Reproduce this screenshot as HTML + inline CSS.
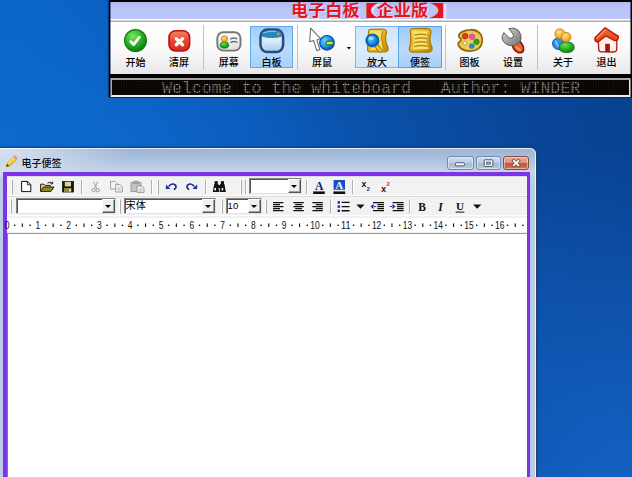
<!DOCTYPE html>
<html lang="zh">
<head>
<meta charset="utf-8">
<title>电子白板</title>
<style>
*{box-sizing:border-box;margin:0;padding:0}
html,body{width:632px;height:477px;overflow:hidden}
body{position:relative;font-family:"Liberation Sans","Noto Sans CJK SC",sans-serif;font-size:12px;color:#000;
background:
 radial-gradient(ellipse 260px 400px at 640px 540px, rgba(26,112,218,.75), rgba(26,112,218,0) 100%),
 radial-gradient(ellipse 380px 340px at 10px 320px, rgba(22,118,220,.5), rgba(22,118,220,0) 100%),
 linear-gradient(72deg,#0b66cc 0%,#0b64c8 25%,#0b5cbc 45%,#0a50a8 63%,#094698 82%,#083f8d 100%);}
.bl,.br{display:inline-block;font-weight:bold}
.bl{transform:scaleX(2.3);transform-origin:84% 50%}
.br{transform:translateX(1.4px) scaleX(2.5);transform-origin:2% 50%}
/* ---------- top whiteboard bar ---------- */
#wb{position:absolute;left:109px;top:0;width:523px;height:97px;background:#000;box-shadow:0 1px 0 #0a2a66,-1px 0 1px rgba(0,20,70,.5)}
#wb .ttl{position:absolute;left:1px;top:2px;right:1px;height:18px;background:linear-gradient(#b0b9f7,#bac4f9 30%,#bcc6fa);color:#e8141c;font-weight:bold;font-size:15.8px;line-height:18px;text-align:center;letter-spacing:0px}
#wb .ttl span{position:absolute;left:181px;transform:scaleX(1.085);transform-origin:0 50%;top:-0.4px;white-space:nowrap;text-shadow:1px 1px 0 rgba(255,235,240,.7)}
#wb .tb{position:absolute;left:1px;top:19px;right:1px;height:55px;border-top:1px solid #fff;background:linear-gradient(#d6d6d0 0,#d6d6d0 1px,#aeaea4 1px,#aeaea4 2px,#ffffff 2px,#fbfbfb 50%,#e8e8e8 100%)}
#wb .tbi{position:absolute;left:1px;top:1px;right:0;bottom:0}
.hl{position:absolute}
#wb .edge{position:absolute;left:1px;top:0;width:1px;bottom:0;background:rgba(0,0,16,.42);z-index:5}
#wb .edge.r{left:auto;right:1px;background:rgba(0,0,16,.5)}
svg.ic{position:absolute;left:0;top:0}
.lb{position:absolute;top:35.8px;width:0;font-weight:500;font-size:10px;line-height:12px;white-space:nowrap;display:flex;justify-content:center;color:#000}
.sep{position:absolute;top:4px;width:1px;height:45px;background:#c2c2c2}
#led{position:absolute;left:1px;top:78px;right:1px;border-right:2px solid #e8e8e8;height:18.6px;background:#000;border-top:2.1px solid #a4a4a4;border-bottom:2px solid #efefef;border-left:2px solid #a8a8a8;overflow:hidden}
#led .dots{position:absolute;left:0;top:0;right:0;bottom:0;background-image:radial-gradient(circle at 1px 1px,#20140a 0.6px,rgba(0,0,0,0) 1px);background-size:1.67px 1.67px}
#led .txt{position:absolute;left:50px;top:1px;font-family:"Liberation Mono","DejaVu Sans Mono",monospace;font-size:16.6px;line-height:15px;color:#cfcfcf;white-space:pre;letter-spacing:0px}
#led .grid{position:absolute;left:0;top:0;right:0;bottom:0;background-image:linear-gradient(rgba(0,0,0,.7) .75px,rgba(0,0,0,0) .75px),linear-gradient(90deg,rgba(0,0,0,.7) .75px,rgba(0,0,0,0) .75px);background-size:1.67px 1.67px}
/* ---------- note window ---------- */
#win{position:absolute;left:-8px;top:147px;width:544.5px;height:340px;border-radius:7px 7px 0 0;background:radial-gradient(ellipse 130px 34px at 8px 0,rgba(255,255,255,.62),rgba(255,255,255,0) 100%),linear-gradient(#9cb4d5 0,#a6bddb 8px,#b6c9e2 16px,#c6d6ea 24px,#b9cde6 30px,#b9cde6 100%);border:1px solid #27406a;box-shadow:0 0 2.5px rgba(0,10,50,.4)}
#win .hi{position:absolute;left:0;right:0;top:0;bottom:0;border-radius:6px 6px 0 0;border:1px solid rgba(255,255,255,.75);border-bottom:none}
#win .pen{margin-left:8px}
#win .cap{position:absolute;left:28.4px;top:9.8px;font-weight:500;font-size:10px;line-height:12px;white-space:nowrap;color:#0a0a14}
#purple{position:absolute;left:3px;top:172px;width:527px;height:320px;background:#7e33e8}
#inner{position:absolute;left:6.5px;top:176px;width:520.5px;height:310px;background:#f1f1f1}
.row{position:absolute;left:0;right:0;height:20px;background:#f2f2f2;border-bottom:1px solid #fdfdfd;border-top:1px solid #dcdcdc}
.cmb{position:absolute;height:16px;background:#fff;border:1px solid #808080;border-right-color:#e4e4e4;border-bottom-color:#e4e4e4;box-shadow:inset 1px 1px 0 #555;font-size:10.1px;line-height:13px;padding-left:0.6px;white-space:nowrap;overflow:hidden;font-family:"Liberation Sans","Noto Sans CJK SC",sans-serif}
.cmb i{position:absolute;right:0;top:0;width:13.5px;bottom:0;background:#efefef;border:1px solid #fff;border-right-color:#555;border-bottom-color:#555;box-shadow:inset -1px -1px 0 #a0a0a0}
.cmb i:after{content:"";position:absolute;left:2.6px;top:4.6px;border-left:3px solid transparent;border-right:3px solid transparent;border-top:3.4px solid #000}
#ruler{position:absolute;left:0;right:0;top:40px;height:18px;background:#f1f1f1}
#ruler .strip{position:absolute;left:0;right:0;top:2px;height:14px;background:#fff}
#edit{position:absolute;left:0;right:0;top:57px;bottom:0;background:#fff;border-top:1px solid #9a9a9a;border-left:1px solid #7c8478}
.wbtn{position:absolute;top:8px;height:14px;border:1px solid #7189ab;border-radius:3px;background:linear-gradient(#cfdcec 0%,#bccde3 48%,#a4bad7 52%,#b7c9e1 100%);box-shadow:inset 0 0 0 1px rgba(255,255,255,.45);margin-left:8px}
.wbtn svg{position:absolute;left:0;top:0}
.wbtn.cls{border-color:#8a4a44;background:linear-gradient(#e5ab9d 0%,#dc9080 48%,#c8543a 52%,#d66e53 100%)}
</style>
</head>
<body>
<div id="wb">
  <div class="ttl"><span>电子白板<b class="bl">【</b>企业版<b class="br">】</b></span></div>
  <div class="tb" id="tb"><div class="tbi">
    <div class="hl" style="left:139px;top:5px;width:43px;height:42px;background:linear-gradient(#a2cdfa,#bcdcfb 50%,#a8d0fa);border:1px solid #62a8ee"></div>
    <div class="hl" style="left:244px;top:5px;width:43px;height:42px;background:linear-gradient(#cfe5fb,#dcecfc 55%,#cfe5fb);border:1px solid #7db6ee;border-right:none"></div>
    <div class="hl" style="left:287px;top:5px;width:44px;height:42px;background:linear-gradient(#9fcbf9,#bcdcfb 55%,#a6cffa);border:1px solid #5aa2ec"></div>
    <div class="sep" style="left:92px"></div><div class="sep" style="left:186px"></div><div class="sep" style="left:334px"></div><div class="sep" style="left:426px"></div>
    <svg class="ic" width="521" height="53" viewBox="111 21 521 53">
      <defs>
        <radialGradient id="gGreen" cx="38%" cy="30%" r="75%"><stop offset="0" stop-color="#7aea5c"/><stop offset=".55" stop-color="#27b027"/><stop offset="1" stop-color="#0f7414"/></radialGradient>
        <linearGradient id="gRed" x1="0" y1="0" x2="0" y2="1"><stop offset="0" stop-color="#f58468"/><stop offset=".5" stop-color="#e8452f"/><stop offset="1" stop-color="#d22a1c"/></linearGradient>
        <linearGradient id="gCard" x1="0" y1="0" x2="0" y2="1"><stop offset="0" stop-color="#ffffff"/><stop offset="1" stop-color="#dedede"/></linearGradient>
        <linearGradient id="gBoard" x1="0" y1="0" x2="0" y2="1"><stop offset="0" stop-color="#f6fbff"/><stop offset=".55" stop-color="#d4e9f9"/><stop offset="1" stop-color="#9ccbee"/></linearGradient>
        <radialGradient id="gBlue" cx="35%" cy="35%" r="70%"><stop offset="0" stop-color="#62d2fa"/><stop offset=".6" stop-color="#1f8ee6"/><stop offset="1" stop-color="#0b4fc4"/></radialGradient>
        <linearGradient id="gGold" x1="0" y1="0" x2="1" y2="1"><stop offset="0" stop-color="#f7dc6a"/><stop offset=".5" stop-color="#e6b41e"/><stop offset="1" stop-color="#bd840a"/></linearGradient>
        <radialGradient id="gOrange" cx="40%" cy="35%" r="70%"><stop offset="0" stop-color="#ffe27a"/><stop offset=".6" stop-color="#f6b43a"/><stop offset="1" stop-color="#d98a1e"/></radialGradient>
        <radialGradient id="gGBody" cx="40%" cy="30%" r="75%"><stop offset="0" stop-color="#6ee05a"/><stop offset=".6" stop-color="#22a822"/><stop offset="1" stop-color="#0d7a12"/></radialGradient>
        <linearGradient id="gGray" x1="0" y1="0" x2="1" y2="1"><stop offset="0" stop-color="#d8d8d8"/><stop offset=".5" stop-color="#a4a4a4"/><stop offset="1" stop-color="#6c6c6c"/></linearGradient>
        <linearGradient id="gRoof" x1="0" y1="0" x2="0" y2="1"><stop offset="0" stop-color="#f4702a"/><stop offset="1" stop-color="#e23a18"/></linearGradient>
      </defs>
      <!-- start -->
      <circle cx="135.5" cy="40.5" r="10.9" fill="url(#gGreen)" stroke="#137a16" stroke-width="1.2"/>
      <path d="M130.8 41.6 L133.6 44.6 L139.4 37.2" fill="none" stroke="#fff" stroke-width="2.7" stroke-linecap="round" stroke-linejoin="round"/>
      <!-- clear -->
      <rect x="169" y="30.8" width="20.6" height="20.2" rx="6.5" fill="url(#gRed)" stroke="#b21410" stroke-width="1.6"/>
      <path d="M176.3 38.7 L182.5 44.7 M182.5 38.7 L176.3 44.7" stroke="#fff4ec" stroke-width="3.4" stroke-linecap="round"/>
      <!-- screen (card) -->
      <rect x="217.3" y="32.2" width="23.2" height="18.4" rx="6" fill="url(#gCard)" stroke="#767676" stroke-width="1.9"/>
      <ellipse cx="224.4" cy="45" rx="4.3" ry="3.2" fill="url(#gGBody)" stroke="#0f7a14" stroke-width=".7"/>
      <circle cx="224.4" cy="38.8" r="3" fill="url(#gOrange)" stroke="#c47a1e" stroke-width=".8"/>
      <path d="M230.8 38.9 Q233.8 37 236.9 38.7 M230.8 42.3 Q233.8 40.6 236.9 42.1" fill="none" stroke="#6e6e6e" stroke-width="1.5" stroke-linecap="round"/>
      <!-- whiteboard -->
      <rect x="260.5" y="29.5" width="22.6" height="22.6" rx="7" fill="url(#gBoard)" stroke="#2a4a80" stroke-width="2.5"/>
      <path d="M261.6 36.4 Q262 30.8 267 30.6 L277 30.6 Q281.8 30.8 282 36.4 Q272 39.4 261.6 36.4Z" fill="#2487be"/>
      <path d="M263 33 Q268 30.9 276 31.6" stroke="#7fd0ee" stroke-width="1" fill="none"/>
      <circle cx="278.3" cy="33.7" r="1.5" fill="#f08a28"/>
      <!-- mouse -->
      <path d="M310.6 28.2 L309.7 41.8 L313.6 40.4 L316.8 50.6 L319.9 49.7 L316.9 39.9 L320.4 38.4 Z" fill="#fff" stroke="#6e6e6e" stroke-width="1.1" stroke-linejoin="round"/>
      <circle cx="327" cy="42.8" r="7.3" fill="url(#gBlue)" stroke="#0d3fb8" stroke-width="1.1"/>
      <rect x="326" y="41.1" width="7.4" height="3.6" rx="1.8" fill="#c9e64a" stroke="#15802a" stroke-width="1.1"/>
      <path d="M346.6 46.9 L351.2 46.9 L348.9 49.5 Z" fill="#111"/>
      <!-- zoom -->
      <path d="M368.6 31.4 Q368.4 29.2 371.4 29.4 L383 29 Q386.4 29.4 386.6 32.4 Q385 36 385.6 40 Q386.4 44 388 47.6 Q388.8 51.4 385.2 51.8 L370 52 Q367 51.6 367.6 48.6 Z" fill="url(#gGold)" stroke="#a87a0a" stroke-width="1.2" stroke-linejoin="round"/>
      <path d="M371 31.2 L382.6 30.8 Q381.2 36 381.8 40 Q382.6 45 384 49.6 L371 50 Z" fill="#f6de68"/>
      <path d="M382.6 31 Q381.2 36 381.8 40 Q382.6 45 384 49.8" stroke="#b8860c" stroke-width="1.1" fill="none"/>
      <path d="M376.4 45.6 L380.2 50.4" stroke="#a87a0a" stroke-width="4.8" stroke-linecap="round"/>
      <path d="M376.4 45.6 L380.2 50.4" stroke="#ecc22e" stroke-width="2.8" stroke-linecap="round"/>
      <circle cx="372.4" cy="40.4" r="5.9" fill="url(#gBlue)" stroke="#0a62ac" stroke-width="2.2"/>
      <ellipse cx="371" cy="38.2" rx="2.8" ry="1.7" fill="#b4e6fc" opacity=".75"/>
      <!-- note -->
      <path d="M410.4 31 Q410.4 28.6 413.6 28.6 L427 28.4 Q430.6 28.8 431 32 Q429.6 36 429.8 40 Q430.4 44 432 47.4 Q432.8 51.6 428.8 52 L412.6 52.2 Q408.8 51.8 409.4 48 Q410.8 44 410.8 40 Q410.8 36 410.4 31 Z" fill="url(#gGold)" stroke="#a87a0a" stroke-width="1.3" stroke-linejoin="round"/>
      <path d="M413.4 31.6 L427.4 31.2 Q426.6 36 426.8 40 Q427.2 45 428.6 49 L412.8 49.4 Q413.8 44 413.8 40 Z" fill="#f8e274"/>
      <path d="M414.6 35 Q420.6 33.4 426.6 34.8 M414.6 38.8 Q420.6 37.2 426.8 38.6 M414.4 42.6 Q420.6 41 427.2 42.4 M414.2 46.4 Q420.6 44.8 427.8 46.2" stroke="#bf8c0c" stroke-width="1.5" fill="none"/>
      <!-- palette -->
      <path d="M470.4 29.8 C477.6 29.4 482.6 34.2 482.2 41 C481.8 47.6 476.6 51.4 469.6 51.2 C463 51 458.4 47.6 458.2 44 C458 41.6 461.4 41.4 461.2 39.6 C461 37.8 458.6 38 458.8 35.8 C459.2 32.4 464.2 30 470.4 29.8 Z" fill="#eccb52" stroke="#94690c" stroke-width="1.8"/>
      <circle cx="465.1" cy="36.1" r="2.9" fill="#e23a1c" stroke="#a3240e" stroke-width=".6"/>
      <circle cx="472.1" cy="36.8" r="2.7" fill="#f24fb4" stroke="#b0308a" stroke-width=".6"/>
      <circle cx="476.5" cy="41.8" r="2.7" fill="#22a822" stroke="#117016" stroke-width=".6"/>
      <circle cx="471.8" cy="46.1" r="2.4" fill="#1f8fe0" stroke="#1262a8" stroke-width=".6"/>
      <ellipse cx="464.9" cy="43.2" rx="2" ry="1.7" fill="#fffdf2" stroke="#a8801c" stroke-width=".7" transform="rotate(35 464.9 43.2)"/>
      <!-- settings -->
      <path d="M512.4 45.4 Q513.2 50.2 518.2 52.4 Q522.6 53.6 523.6 50 Q524 45.4 519.4 41.2 Z" fill="#e8642c" stroke="#8e0c0c" stroke-width="1.6" stroke-linejoin="round"/>
      <path d="M516 46.4 Q517.6 49.6 520.6 50" stroke="#f6a05a" stroke-width="1.4" fill="none" stroke-linecap="round"/>
      <path d="M508.8 28.6 Q514 26.8 518.2 30.2 Q522.2 34.2 520.8 40 Q518.6 45.6 512.2 45.8 Q504.6 45.4 502.2 39.2 Q501.6 35.4 504 32.6 L509 37.8 Q511.2 39 512.8 37.4 Q514.2 35.6 512.8 33.8 Z" fill="url(#gGray)" stroke="#5c5c5c" stroke-width="1" stroke-linejoin="round"/>
      <!-- about -->
      <path d="M552.6 44 Q552.4 38.4 558 38.2 L563 38.4 L563 49.6 Q557 50.6 554.2 47.8 Q552.8 46.4 552.6 44Z" fill="#2a92e6" stroke="#0f58a8" stroke-width="1"/>
      <path d="M555.8 41 Q556.4 45.4 559.6 47" stroke="#8ad2fb" stroke-width="1.6" fill="none" stroke-linecap="round"/>
      <circle cx="559.8" cy="33.8" r="5" fill="url(#gOrange)" stroke="#cc8426" stroke-width=".9"/>
      <path d="M559 48 Q558.6 42 566.4 41.8 Q574.4 42 574.2 48 Q573.4 52.6 566.6 52.6 Q559.6 52.4 559 48Z" fill="url(#gGBody)" stroke="#0e7414" stroke-width=".9"/>
      <circle cx="566.1" cy="37.1" r="4.8" fill="url(#gOrange)" stroke="#cc8426" stroke-width=".9"/>
      <!-- exit -->
      <path d="M598.2 40 L598.8 49.6 Q599 51.6 601.4 51.8 L613.6 52 Q616.8 51.8 616.8 49 L616.8 39 L606 33.6 Z" fill="#fff1ea" stroke="#b01a12" stroke-width="1.3" stroke-linejoin="round"/>
      <rect x="605.2" y="43.8" width="4.6" height="8.2" fill="#9c1612"/>
      <path d="M605.1 27.7 L595 37.8 Q594 42 598 42 L605.8 36 L614.6 40.6 Q618.8 40.8 618.4 36.4 Z" fill="url(#gRoof)" stroke="#b01410" stroke-width="1.3" stroke-linejoin="round"/>
      <path d="M605.2 29.8 L597 38.2" stroke="#f89a4a" stroke-width="1.4" stroke-linecap="round" fill="none"/>
    </svg>
    <div class="lb" style="left:24.4px">开始</div><div class="lb" style="left:68px">清屏</div>
    <div class="lb" style="left:117.7px">屏幕</div><div class="lb" style="left:160.5px">白板</div>
    <div class="lb" style="left:211px">屏鼠</div><div class="lb" style="left:266px">放大</div><div class="lb" style="left:309px">便签</div>
    <div class="lb" style="left:358.6px">图板</div><div class="lb" style="left:402px">设置</div>
    <div class="lb" style="left:452px">关于</div><div class="lb" style="left:495.4px">退出</div>
  </div></div>
  <div class="edge"></div><div class="edge r"></div>
  <div id="led"><div class="dots"></div><div class="txt">Welcome to the whiteboard   Author: WINDER</div><div class="grid"></div></div>
</div>
<div id="win">
  <div class="hi"></div>
  <svg class="pen" width="14" height="14" viewBox="5 155 14 14" style="position:absolute;left:3.8px;top:7.4px">
    <path d="M6.2 166.8 L7.4 163.4 L13.6 156.6 Q15 155.6 16.2 156.8 Q17.4 158 16.4 159.4 L10 166 Z" fill="#f6cf2a" stroke="#b98a10" stroke-width=".7"/>
    <path d="M13.2 157 L16 159.8 L16.6 159 Q17.4 157.8 16.2 156.7 Q15 155.7 13.9 156.4Z" fill="#f08aa6"/>
    <path d="M6.2 166.8 L7.2 164 L9.2 165.8 Z" fill="#4a3510"/>
    <path d="M8.4 163.2 L14 157.2" stroke="#fff2a0" stroke-width="1" fill="none"/>
  </svg>
  <div class="cap">电子便签</div>
  <div class="wbtn" style="left:446px;width:26.5px"><svg width="23" height="12" viewBox="0 0 23 12"><rect x="7.4" y="5.8" width="9" height="3" rx=".8" fill="#fff" stroke="#3c4a5e" stroke-width=".9"/></svg></div>
  <div class="wbtn" style="left:474.5px;width:25.5px"><svg width="23" height="12" viewBox="0 0 23 12"><rect x="7.2" y="2.8" width="8.6" height="6.6" rx=".8" fill="#fff" stroke="#3c4a5e" stroke-width=".9"/><rect x="9.6" y="5" width="3.8" height="2.2" fill="#9db4cf" stroke="#3c4a5e" stroke-width=".7"/></svg></div>
  <div class="wbtn cls" style="left:501.6px;width:26.5px"><svg width="24" height="12" viewBox="0 0 24 12"><path d="M9.8 3.8 L14.4 8.2 M14.4 3.8 L9.8 8.2" stroke="#6a3a32" stroke-width="3.2" stroke-linecap="square"/><path d="M9.8 3.8 L14.4 8.2 M14.4 3.8 L9.8 8.2" stroke="#fff" stroke-width="1.9" stroke-linecap="square"/></svg></div>
</div>
<div id="purple"></div>
<div id="inner">
  <div class="row" style="top:0"></div>
  <div class="row" style="top:20px"></div>
  <div id="ruler"><div class="strip"></div></div>
  <div id="edit"></div>
</div>
<svg id="tbi" width="632" height="70" viewBox="0 170 632 70" style="position:absolute;left:0;top:170px">
  <g class="grips" fill="none">
    <path d="M12.5 180 V194.5 M241.5 180 V194.5 M158.5 180 V194.5 M11.5 199.5 V213.5 M120.5 199.5 V213.5 M222.5 199.5 V213.5 M266.5 199.5 V213.5" stroke="#aaaaaa" stroke-width="1"/>
    <path d="M11.5 180 V194.5 M240.5 180 V194.5 M157.5 180 V194.5 M10.5 199.5 V213.5 M119.5 199.5 V213.5 M221.5 199.5 V213.5 M265.5 199.5 V213.5" stroke="#fff" stroke-width="1"/>
    <path d="M81.5 180 V194 M151.5 180 V194 M205.5 180 V194 M245.5 180 V194 M306.5 180 V194 M352.5 180 V194 M330.5 199.5 V213 M409.5 199.5 V213" stroke="#b0b0b0" stroke-width="1"/>
    <path d="M82.5 180 V194 M152.5 180 V194 M206.5 180 V194 M246.5 180 V194 M307.5 180 V194 M353.5 180 V194 M331.5 199.5 V213 M410.5 199.5 V213" stroke="#fff" stroke-width="1"/>
  </g>
  <!-- new -->
  <path d="M21.6 181.4 H27.6 L30.8 184.6 V191.6 H21.6 Z" fill="#fff" stroke="#111" stroke-width="1"/>
  <path d="M27.4 181.6 V184.8 H30.6" fill="none" stroke="#111" stroke-width=".9"/>
  <!-- open -->
  <path d="M40.6 191.4 V184.2 H44 L45 185.4 H50.2 V187" fill="#e8d66a" stroke="#2a2608" stroke-width="1"/>
  <path d="M40.6 191.4 L43.4 187 H54 L51 191.4 Z" fill="#8f8a2a" stroke="#2a2608" stroke-width="1" stroke-linejoin="round"/>
  <path d="M47.4 183.2 Q50 181 52.4 183.4 M52.6 181.6 V183.8 H50.4" fill="none" stroke="#111" stroke-width=".9"/>
  <!-- save -->
  <rect x="62.6" y="181.4" width="10.8" height="10.6" fill="#1a1a10" stroke="#111" stroke-width=".8"/>
  <rect x="64.8" y="181.8" width="6.2" height="4.6" fill="#d8d3a0"/>
  <rect x="64" y="188" width="7.4" height="4" fill="#8d8a3a"/>
  <rect x="69.2" y="188.8" width="1.6" height="2.6" fill="#eee"/>
  <!-- cut -->
  <g stroke="#9a9a9a" fill="none" stroke-width="1">
    <path d="M93.4 181.6 L96.8 188.4 M97.8 181.6 L94.4 188.4"/>
    <circle cx="93.6" cy="190.2" r="1.7"/><circle cx="97.8" cy="190.2" r="1.7"/>
  </g>
  <!-- copy -->
  <g stroke="#a0a0a0" fill="#f4f4f4" stroke-width="1">
    <path d="M110.6 181.4 H115 L117 183.4 V189 H110.6 Z"/>
    <path d="M115.6 184.6 H120 L122.4 186.8 V192 H115.6 Z"/>
    <path d="M117.2 188 H120.8 M117.2 189.8 H120.8" fill="none" stroke-width=".7"/>
  </g>
  <!-- paste -->
  <g stroke="#9a9a9a" stroke-width="1">
    <rect x="131" y="182.6" width="10" height="9" fill="#c4c4c4"/>
    <rect x="134" y="181.2" width="4" height="2.4" fill="#b0b0b0"/>
    <path d="M137 186 H141.6 L144 188.2 V192.4 H137 Z" fill="#f6f6f6"/>
    <path d="M138.6 189 H142.4 M138.6 190.8 H142.4" fill="none" stroke-width=".7"/>
  </g>
  <!-- undo / redo -->
  <path d="M165.9 184.4 V188.9 H170.4 Z" fill="#1a2a9a"/>
  <path d="M168.6 186.6 Q170.6 183.6 173.4 184 Q176.4 184.8 176 187.2 Q175.6 188.8 173.8 189.6" fill="none" stroke="#1a2a9a" stroke-width="1.6"/>
  <path d="M197.1 184.4 V188.9 H192.6 Z" fill="#1a2a9a"/>
  <path d="M194.4 186.6 Q192.4 183.6 189.6 184 Q186.6 184.8 187 187.2 Q187.4 188.8 189.2 189.6" fill="none" stroke="#1a2a9a" stroke-width="1.6"/>
  <!-- find -->
  <g fill="#111">
    <rect x="214.6" y="181.2" width="3.2" height="3" /><rect x="220.8" y="181.2" width="3.2" height="3"/>
    <path d="M214.2 184 H218.4 L219 192 H212.8 Z"/><path d="M220.2 184 H224.4 L225.8 192 H219.6 Z"/>
    <rect x="217.6" y="185" width="3.4" height="3"/>
  </g>
  <rect x="214.4" y="188" width="1.6" height="2.4" fill="#fff"/><rect x="221.6" y="188" width="1.6" height="2.4" fill="#fff"/>
  <!-- font color -->
  <text x="319.2" y="189.6" text-anchor="middle" font-family="Liberation Serif,serif" font-weight="bold" font-size="11.6" fill="#14147a">A</text>
  <rect x="313.2" y="191.4" width="11.6" height="2.6" fill="#111"/>
  <rect x="333.6" y="180" width="11.4" height="9.8" fill="#1a4ad0"/>
  <text x="339.3" y="189.2" text-anchor="middle" font-family="Liberation Serif,serif" font-weight="bold" font-size="11" fill="#e8ffe8">A</text>
  <rect x="333.4" y="191.4" width="11.8" height="2.6" fill="#111"/>
  <!-- sub / super -->
  <text x="361.4" y="187.2" font-family="Liberation Sans,sans-serif" font-weight="bold" font-size="8.6" fill="#111">x</text>
  <text x="366.6" y="190.6" font-family="Liberation Sans,sans-serif" font-weight="bold" font-size="6" fill="#2a2ad0">2</text>
  <text x="381.2" y="191.6" font-family="Liberation Sans,sans-serif" font-weight="bold" font-size="8.6" fill="#111">x</text>
  <text x="386.6" y="186.2" font-family="Liberation Sans,sans-serif" font-weight="bold" font-size="6" fill="#d02a2a">2</text>
  <!-- align -->
  <g stroke="#111" stroke-width="1.25" fill="none">
    <path d="M273 202.5 H283.4 M273 204.5 H280 M273 206.5 H283.4 M273 208.5 H280 M273 210.5 H283.4"/>
    <path d="M293.4 202.5 H303.8 M295.2 204.5 H302 M293.4 206.5 H303.8 M295.2 208.5 H302 M293.4 210.5 H303.8"/>
    <path d="M312.4 202.5 H322.8 M315.8 204.5 H322.8 M312.4 206.5 H322.8 M315.8 208.5 H322.8 M312.4 210.5 H322.8"/>
    <path d="M341.6 202.4 H349.6 M341.6 206.6 H349.6 M341.6 210.8 H349.6" stroke-width="1.4"/>
    <path d="M373 202.5 H384 M377.4 204.5 H384 M377.4 206.5 H384 M377.4 208.5 H384 M373 210.5 H384" />
    <path d="M392.6 202.5 H403.6 M397 204.5 H403.6 M397 206.5 H403.6 M397 208.5 H403.6 M392.6 210.5 H403.6" />
  </g>
  <g fill="#1a2a9a"><rect x="337.6" y="201.2" width="2.4" height="2.4"/><rect x="337.6" y="205.4" width="2.4" height="2.4"/><rect x="337.6" y="209.6" width="2.4" height="2.4"/>
    <path d="M370.4 206.5 L373.6 204 V209 Z M376.2 205.9 H373 V207.1 H376.2Z"/>
    <path d="M395.6 206.5 L392.4 204 V209 Z M389.8 205.9 H393 V207.1 H389.8Z"/>
  </g>
  <path d="M356.4 204.6 H364.6 L360.5 208.8 Z" fill="#111"/>
  <path d="M473 204.6 H481.4 L477.2 208.8 Z" fill="#111"/>
  <text x="422" y="211" text-anchor="middle" font-family="Liberation Serif,serif" font-weight="bold" font-size="11.5" fill="#111">B</text>
  <text x="440.6" y="211" text-anchor="middle" font-family="Liberation Serif,serif" font-weight="bold" font-style="italic" font-size="11.5" fill="#111">I</text>
  <text x="460" y="210.4" text-anchor="middle" font-family="Liberation Serif,serif" font-weight="bold" font-size="11" fill="#111">U</text>
  <rect x="455.6" y="211.6" width="8.8" height="1" fill="#111"/>
  <g font-family="Liberation Sans,sans-serif" font-size="10" fill="#111">
      <text x="7.0" y="229.2" text-anchor="middle" textLength="4.7" lengthAdjust="spacingAndGlyphs">0</text>
      <rect x="14.0" y="224.6" width="1.4" height="1.4"/>
      <rect x="21.8" y="223.4" width="1.1" height="3.6"/>
      <rect x="29.4" y="224.6" width="1.4" height="1.4"/>
      <text x="37.8" y="229.2" text-anchor="middle" textLength="4.7" lengthAdjust="spacingAndGlyphs">1</text>
      <rect x="44.8" y="224.6" width="1.4" height="1.4"/>
      <rect x="52.6" y="223.4" width="1.1" height="3.6"/>
      <rect x="60.2" y="224.6" width="1.4" height="1.4"/>
      <text x="68.6" y="229.2" text-anchor="middle" textLength="4.7" lengthAdjust="spacingAndGlyphs">2</text>
      <rect x="75.6" y="224.6" width="1.4" height="1.4"/>
      <rect x="83.5" y="223.4" width="1.1" height="3.6"/>
      <rect x="91.0" y="224.6" width="1.4" height="1.4"/>
      <text x="99.4" y="229.2" text-anchor="middle" textLength="4.7" lengthAdjust="spacingAndGlyphs">3</text>
      <rect x="106.4" y="224.6" width="1.4" height="1.4"/>
      <rect x="114.3" y="223.4" width="1.1" height="3.6"/>
      <rect x="121.8" y="224.6" width="1.4" height="1.4"/>
      <text x="130.2" y="229.2" text-anchor="middle" textLength="4.7" lengthAdjust="spacingAndGlyphs">4</text>
      <rect x="137.2" y="224.6" width="1.4" height="1.4"/>
      <rect x="145.0" y="223.4" width="1.1" height="3.6"/>
      <rect x="152.6" y="224.6" width="1.4" height="1.4"/>
      <text x="161.0" y="229.2" text-anchor="middle" textLength="4.7" lengthAdjust="spacingAndGlyphs">5</text>
      <rect x="168.0" y="224.6" width="1.4" height="1.4"/>
      <rect x="175.8" y="223.4" width="1.1" height="3.6"/>
      <rect x="183.4" y="224.6" width="1.4" height="1.4"/>
      <text x="191.8" y="229.2" text-anchor="middle" textLength="4.7" lengthAdjust="spacingAndGlyphs">6</text>
      <rect x="198.8" y="224.6" width="1.4" height="1.4"/>
      <rect x="206.7" y="223.4" width="1.1" height="3.6"/>
      <rect x="214.2" y="224.6" width="1.4" height="1.4"/>
      <text x="222.6" y="229.2" text-anchor="middle" textLength="4.7" lengthAdjust="spacingAndGlyphs">7</text>
      <rect x="229.6" y="224.6" width="1.4" height="1.4"/>
      <rect x="237.4" y="223.4" width="1.1" height="3.6"/>
      <rect x="245.0" y="224.6" width="1.4" height="1.4"/>
      <text x="253.4" y="229.2" text-anchor="middle" textLength="4.7" lengthAdjust="spacingAndGlyphs">8</text>
      <rect x="260.4" y="224.6" width="1.4" height="1.4"/>
      <rect x="268.2" y="223.4" width="1.1" height="3.6"/>
      <rect x="275.8" y="224.6" width="1.4" height="1.4"/>
      <text x="284.2" y="229.2" text-anchor="middle" textLength="4.7" lengthAdjust="spacingAndGlyphs">9</text>
      <rect x="291.2" y="224.6" width="1.4" height="1.4"/>
      <rect x="299.0" y="223.4" width="1.1" height="3.6"/>
      <rect x="306.6" y="224.6" width="1.4" height="1.4"/>
      <text x="315.0" y="229.2" text-anchor="middle" textLength="9.4" lengthAdjust="spacingAndGlyphs">10</text>
      <rect x="322.0" y="224.6" width="1.4" height="1.4"/>
      <rect x="329.8" y="223.4" width="1.1" height="3.6"/>
      <rect x="337.4" y="224.6" width="1.4" height="1.4"/>
      <text x="345.8" y="229.2" text-anchor="middle" textLength="9.4" lengthAdjust="spacingAndGlyphs">11</text>
      <rect x="352.8" y="224.6" width="1.4" height="1.4"/>
      <rect x="360.6" y="223.4" width="1.1" height="3.6"/>
      <rect x="368.2" y="224.6" width="1.4" height="1.4"/>
      <text x="376.6" y="229.2" text-anchor="middle" textLength="9.4" lengthAdjust="spacingAndGlyphs">12</text>
      <rect x="383.6" y="224.6" width="1.4" height="1.4"/>
      <rect x="391.4" y="223.4" width="1.1" height="3.6"/>
      <rect x="399.0" y="224.6" width="1.4" height="1.4"/>
      <text x="407.4" y="229.2" text-anchor="middle" textLength="9.4" lengthAdjust="spacingAndGlyphs">13</text>
      <rect x="414.4" y="224.6" width="1.4" height="1.4"/>
      <rect x="422.2" y="223.4" width="1.1" height="3.6"/>
      <rect x="429.8" y="224.6" width="1.4" height="1.4"/>
      <text x="438.2" y="229.2" text-anchor="middle" textLength="9.4" lengthAdjust="spacingAndGlyphs">14</text>
      <rect x="445.2" y="224.6" width="1.4" height="1.4"/>
      <rect x="453.0" y="223.4" width="1.1" height="3.6"/>
      <rect x="460.6" y="224.6" width="1.4" height="1.4"/>
      <text x="469.0" y="229.2" text-anchor="middle" textLength="9.4" lengthAdjust="spacingAndGlyphs">15</text>
      <rect x="476.0" y="224.6" width="1.4" height="1.4"/>
      <rect x="483.8" y="223.4" width="1.1" height="3.6"/>
      <rect x="491.4" y="224.6" width="1.4" height="1.4"/>
      <text x="499.8" y="229.2" text-anchor="middle" textLength="9.4" lengthAdjust="spacingAndGlyphs">16</text>
      <rect x="506.8" y="224.6" width="1.4" height="1.4"/>
      <rect x="514.7" y="223.4" width="1.1" height="3.6"/>
      <rect x="522.2" y="224.6" width="1.4" height="1.4"/>
  </g>
</svg>
<div class="cmb" style="left:249px;top:178px;width:53px"><i></i></div>
<div class="cmb" style="left:16px;top:198px;width:100px"><i></i></div>
<div class="cmb" style="left:124px;top:198px;width:92px">宋体<i></i></div>
<div class="cmb" style="left:226px;top:198px;width:36px"><span style="font-size:9.5px">10</span><i></i></div>
</body>
</html>
